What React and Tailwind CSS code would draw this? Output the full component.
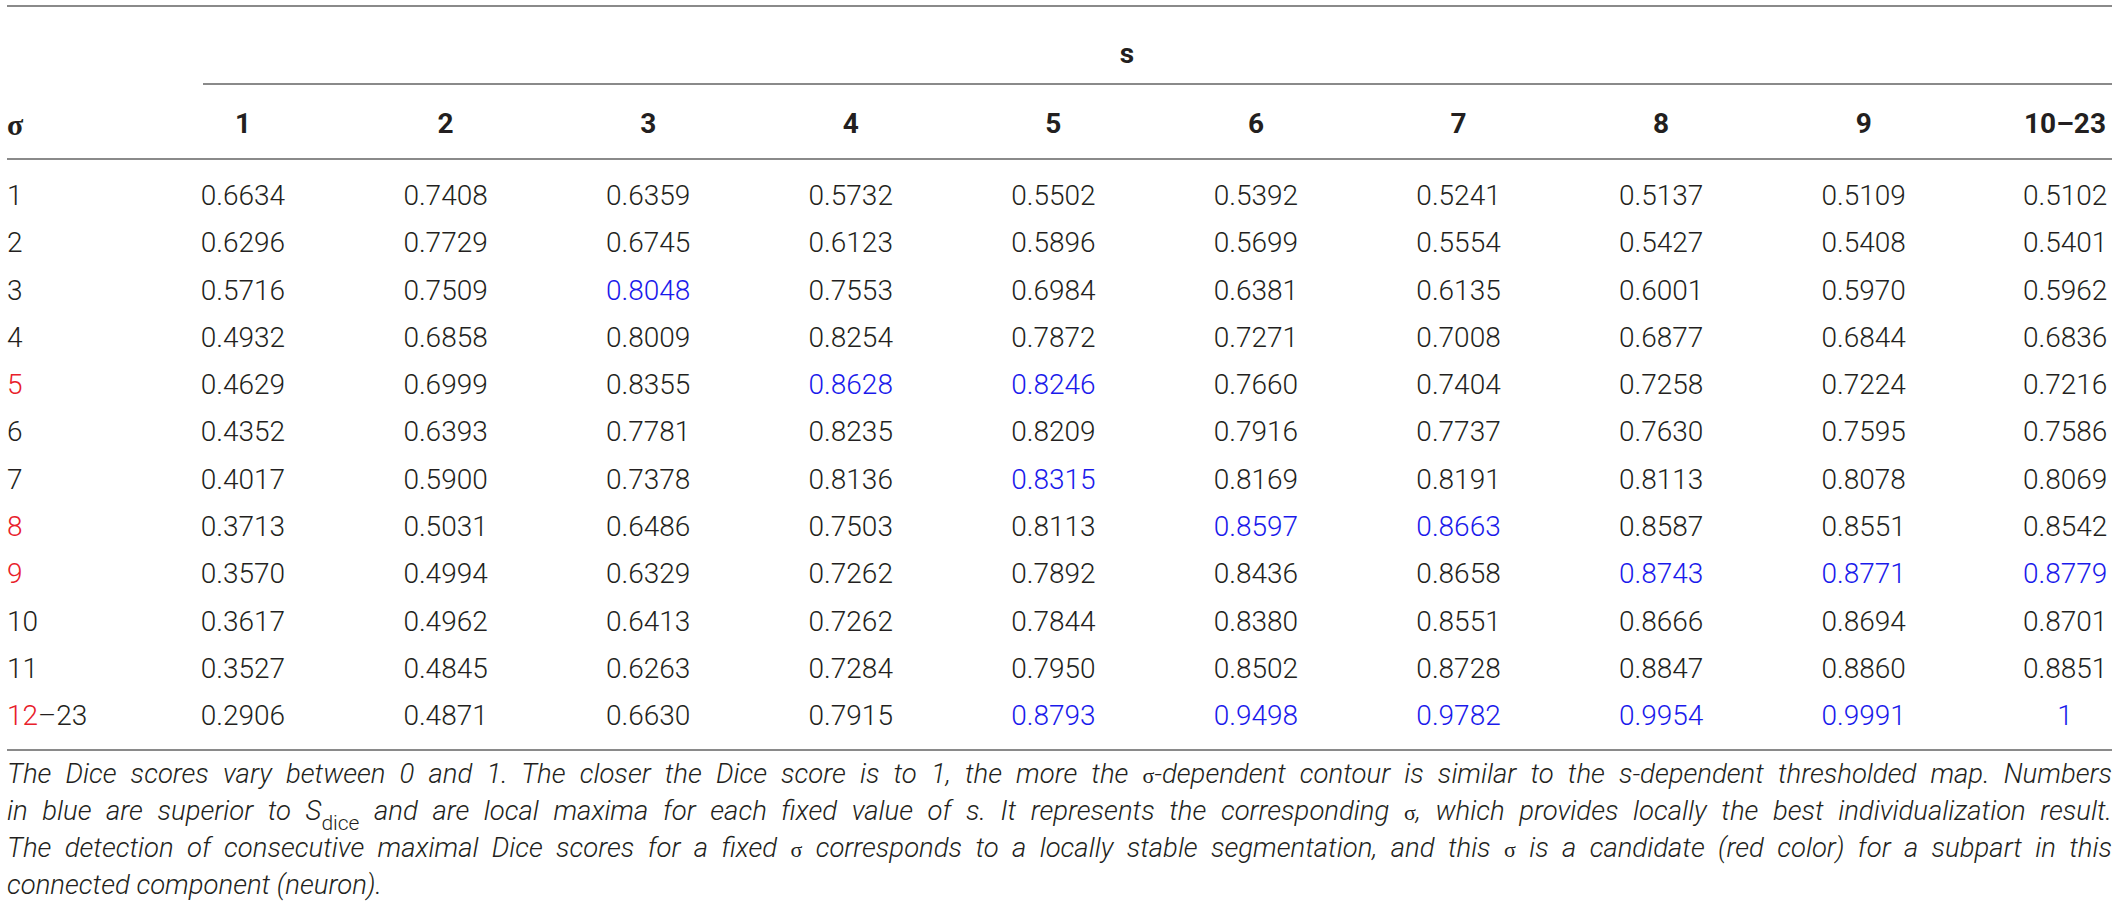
import React from "react";

const ROWS = [
  { s: "1", v: ["0.6634", "0.7408", "0.6359", "0.5732", "0.5502", "0.5392", "0.5241", "0.5137", "0.5109", "0.5102"] },
  { s: "2", v: ["0.6296", "0.7729", "0.6745", "0.6123", "0.5896", "0.5699", "0.5554", "0.5427", "0.5408", "0.5401"] },
  { s: "3", v: ["0.5716", "0.7509", "0.8048", "0.7553", "0.6984", "0.6381", "0.6135", "0.6001", "0.5970", "0.5962"], blue: [2] },
  { s: "4", v: ["0.4932", "0.6858", "0.8009", "0.8254", "0.7872", "0.7271", "0.7008", "0.6877", "0.6844", "0.6836"] },
  { s: "5", red: true, v: ["0.4629", "0.6999", "0.8355", "0.8628", "0.8246", "0.7660", "0.7404", "0.7258", "0.7224", "0.7216"], blue: [3, 4] },
  { s: "6", v: ["0.4352", "0.6393", "0.7781", "0.8235", "0.8209", "0.7916", "0.7737", "0.7630", "0.7595", "0.7586"] },
  { s: "7", v: ["0.4017", "0.5900", "0.7378", "0.8136", "0.8315", "0.8169", "0.8191", "0.8113", "0.8078", "0.8069"], blue: [4] },
  { s: "8", red: true, v: ["0.3713", "0.5031", "0.6486", "0.7503", "0.8113", "0.8597", "0.8663", "0.8587", "0.8551", "0.8542"], blue: [5, 6] },
  { s: "9", red: true, v: ["0.3570", "0.4994", "0.6329", "0.7262", "0.7892", "0.8436", "0.8658", "0.8743", "0.8771", "0.8779"], blue: [7, 8, 9] },
  { s: "10", v: ["0.3617", "0.4962", "0.6413", "0.7262", "0.7844", "0.8380", "0.8551", "0.8666", "0.8694", "0.8701"] },
  { s: "11", v: ["0.3527", "0.4845", "0.6263", "0.7284", "0.7950", "0.8502", "0.8728", "0.8847", "0.8860", "0.8851"] },
  { s: "12–23", range: true, v: ["0.2906", "0.4871", "0.6630", "0.7915", "0.8793", "0.9498", "0.9782", "0.9954", "0.9991", "1"], blue: [4, 5, 6, 7, 8, 9] },
];

const HEAD = ["1", "2", "3", "4", "5", "6", "7", "8", "9", "10–23"];
const GRID = "grid grid-cols-[134.7px_repeat(9,202.6px)_1fr]";

function Cell({ i, children, className = "" }) {
  if (i === 9) {
    return (
      <div className="flex justify-end pr-[5px]">
        <div className={`w-[84px] text-center ${className}`}>{children}</div>
      </div>
    );
  }
  return <div className={`text-center ${className}`}>{children}</div>;
}

const Sig = () => <span className="font-['Liberation_Serif',serif] not-italic text-[22px]">σ</span>;

export default function App() {
  return (
    <div className="w-[2118px] h-[911px] overflow-hidden bg-white pt-[5px] pl-[7px] pr-[6px] text-[#231f20] font-['Roboto','Liberation_Sans',sans-serif] text-[28px]">
      <div className="h-[2px] bg-[#8a8a8a]" />

      <div className={`${GRID} h-[76px]`}>
        <div />
        <div className="col-span-10 flex items-end justify-center pb-[15px] font-bold leading-none">s</div>
      </div>
      <div className="h-[2px] bg-[#8a8a8a] ml-[196px]" />

      <div className={`${GRID} h-[73px] items-center pt-[5px] font-bold`}>
        <div className="font-['Liberation_Serif',serif] text-[30px]">σ</div>
        {HEAD.map((h, i) => (
          <Cell key={h} i={i}>{h}</Cell>
        ))}
      </div>
      <div className="h-[2px] bg-[#8a8a8a]" />

      <div className="pt-[12px] pb-[9px] font-light">
        {ROWS.map((r) => (
          <div key={r.s} className={`${GRID} h-[47.3px] leading-[47.3px]`}>
            <div>
              {r.range ? (
                <>
                  <span className="text-[#e8202a]">12</span>–23
                </>
              ) : (
                <span className={r.red ? "text-[#e8202a]" : ""}>{r.s}</span>
              )}
            </div>
            {r.v.map((v, i) => (
              <Cell key={i} i={i} className={r.blue && r.blue.includes(i) ? "text-[#1a1aeb]" : ""}>
                {v}
              </Cell>
            ))}
          </div>
        ))}
      </div>
      <div className="h-[2px] bg-[#8a8a8a]" />

      {/* caption, one div per printed line so the breaks match */}
      <div className="pt-[4px] italic font-light leading-[37.3px] text-[27.5px]">
        <div className="h-[37.3px] text-justify [text-align-last:justify]">
          The Dice scores vary between 0 and 1. The closer the Dice score is to 1, the more the <Sig />-dependent contour is similar to the s-dependent thresholded map. Numbers
        </div>
        <div className="h-[37.3px] text-justify [text-align-last:justify]">
          in blue are superior to S<sub className="not-italic text-[21px] leading-none align-[-5px]">dice</sub> and are local maxima for each fixed value of s. It represents the corresponding <Sig />, which provides locally the best individualization result.
        </div>
        <div className="h-[37.3px] text-justify [text-align-last:justify]">
          The detection of consecutive maximal Dice scores for a fixed <Sig /> corresponds to a locally stable segmentation, and this <Sig /> is a candidate (red color) for a subpart in this
        </div>
        <div className="h-[37.3px]">connected component (neuron).</div>
      </div>
    </div>
  );
}
